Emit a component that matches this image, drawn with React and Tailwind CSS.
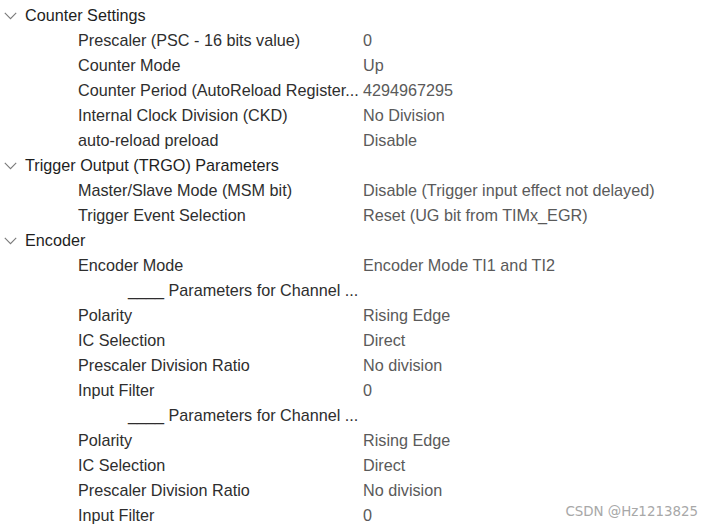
import React from "react";

const Chevron = () => (
  <svg width="13" height="8" viewBox="0 0 13 8" className="shrink-0">
    <polyline points="0.8,0.8 6.5,6.6 12.2,0.8" fill="none" stroke="#7a7a7a" strokeWidth="1.1" />
  </svg>
);

const Header = ({ text }) => (
  <div className="flex h-[25px] items-center">
    <div className="flex w-[25px] items-center pl-[4px]">
      <Chevron />
    </div>
    <span className="whitespace-nowrap text-[#1e1e1e]">{text}</span>
  </div>
);

const Row = ({ label, value, sub }) => (
  <div className="flex h-[25px] items-center">
    <div className={`w-[363px] shrink-0 whitespace-nowrap text-[#2e2e2e] ${sub ? "pl-[128px]" : "pl-[78px]"}`}>
      {label}
    </div>
    <div className="whitespace-nowrap text-[#5a5a5a]">{value}</div>
  </div>
);

export default function App() {
  return (
    <div
      className="relative h-[528px] w-[714px] overflow-hidden bg-white pt-[3px] text-[16.2px] leading-none"
      style={{ fontFamily: '"Liberation Sans", Arial, sans-serif' }}
    >
      <Header text="Counter Settings" />
      <Row label="Prescaler (PSC - 16 bits value)" value="0" />
      <Row label="Counter Mode" value="Up" />
      <Row label="Counter Period (AutoReload Register..." value="4294967295" />
      <Row label="Internal Clock Division (CKD)" value="No Division" />
      <Row label="auto-reload preload" value="Disable" />
      <Header text="Trigger Output (TRGO) Parameters" />
      <Row label="Master/Slave Mode (MSM bit)" value="Disable (Trigger input effect not delayed)" />
      <Row label="Trigger Event Selection" value="Reset (UG bit from TIMx_EGR)" />
      <Header text="Encoder" />
      <Row label="Encoder Mode" value="Encoder Mode TI1 and TI2" />
      <Row sub label="____ Parameters for Channel ..." value="" />
      <Row label="Polarity" value="Rising Edge" />
      <Row label="IC Selection" value="Direct" />
      <Row label="Prescaler Division Ratio" value="No division" />
      <Row label="Input Filter" value="0" />
      <Row sub label="____ Parameters for Channel ..." value="" />
      <Row label="Polarity" value="Rising Edge" />
      <Row label="IC Selection" value="Direct" />
      <Row label="Prescaler Division Ratio" value="No division" />
      <Row label="Input Filter" value="0" />
      <div
        className="absolute right-[16px] top-[505px] text-[13.4px] text-[#a8a8a8]"
        style={{ fontFamily: '"DejaVu Sans", sans-serif' }}
      >
        CSDN @Hz1213825
      </div>
    </div>
  );
}
